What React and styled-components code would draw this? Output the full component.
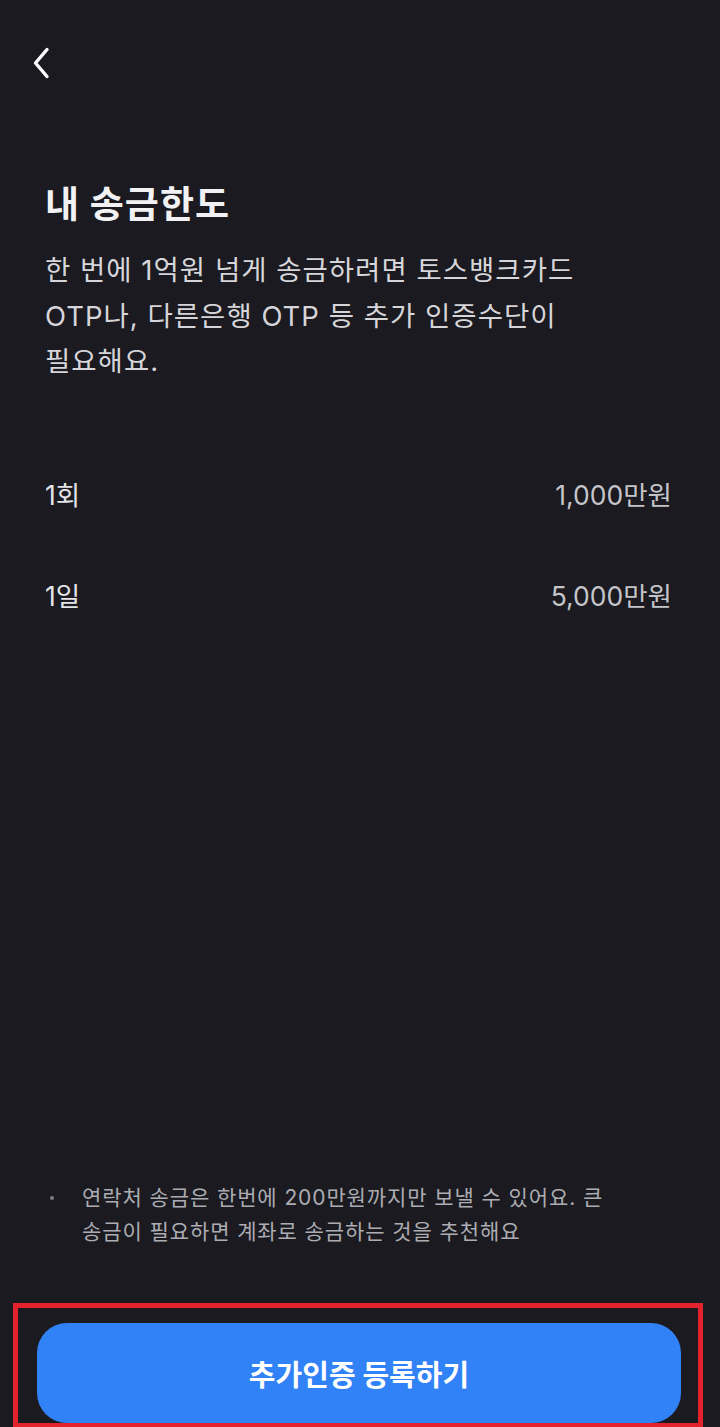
import React from "react";
import styled, { createGlobalStyle } from "styled-components";

const GlobalStyle = createGlobalStyle`
  html, body {
    margin: 0;
    padding: 0;
    background: #1a1a20;
  }
  * {
    box-sizing: border-box;
  }
`;

const Page = styled.div`
  min-height: 1427px;
  display: flex;
  flex-direction: column;
  background: #1a1a20;
  font-family: Inter, "Noto Sans CJK KR", sans-serif;
  color: #ececef;
`;

const Header = styled.div`
  height: 128px;
  padding: 43px 0 0 22px;
`;

const BackButton = styled.button`
  width: 40px;
  height: 40px;
  padding: 0;
  border: none;
  background: none;
  display: flex;
  align-items: center;
  justify-content: center;
  cursor: pointer;
`;

const Intro = styled.section`
  padding: 54px 45px 0;
`;

const Title = styled.h1`
  margin: 0 0 20px;
  font-size: 37px;
  line-height: 46px;
  font-weight: 700;
  letter-spacing: 1px;
  color: #f2f2f4;
`;

const Description = styled.p`
  margin: 0;
  font-size: 27.5px;
  line-height: 45.5px;
  letter-spacing: 1px;
  color: #d6d6da;
`;

const LimitList = styled.div`
  padding: 58px 48px 0 45px;
  display: flex;
  flex-direction: column;
`;

const LimitRow = styled.div`
  height: 101px;
  display: flex;
  align-items: center;
  justify-content: space-between;
  font-size: 26.5px;
`;

const Label = styled.span`
  color: #e4e4e8;
`;

const Value = styled.span`
  color: #c4c4c9;
`;

const Spacer = styled.div`
  flex: 1;
`;

const Notes = styled.ul`
  margin: 0;
  padding: 0 90px 0 48px;
  list-style: none;
`;

const Note = styled.li`
  position: relative;
  padding-left: 34px;
  font-size: 21px;
  line-height: 34px;
  letter-spacing: 0.9px;
  color: #acacb2;

  &::before {
    content: "";
    position: absolute;
    left: 2px;
    top: 15px;
    width: 4px;
    height: 4px;
    border-radius: 50%;
    background: #7c7c84;
  }
`;

const Highlight = styled.div`
  margin: 54px 17px 0 13px;
  padding: 15px 17px 0 19px;
  height: 124px;
  border: 5px solid #e3222b;
  border-bottom-width: 4px;
  overflow: hidden;
`;

const PrimaryButton = styled.button`
  width: 100%;
  height: 100px;
  border: none;
  border-radius: 30px;
  background: #3182f6;
  color: #ffffff;
  font-family: Inter, "Noto Sans CJK KR", sans-serif;
  font-size: 29px;
  font-weight: 700;
  cursor: pointer;
`;

export default function App() {
  return (
    <>
      <GlobalStyle />
      <Page>
        <Header>
          <BackButton aria-label="뒤로">
            <svg width="20" height="32" viewBox="0 0 20 32" fill="none">
              <path
                d="M15 2.5 L3.5 16 L15 29.5"
                stroke="#ffffff"
                strokeWidth="3.4"
                strokeLinecap="round"
                strokeLinejoin="round"
              />
            </svg>
          </BackButton>
        </Header>
        <Intro>
          <Title>내 송금한도</Title>
          <Description>
            한 번에 1억원 넘게 송금하려면 토스뱅크카드
            <br />
            OTP나, 다른은행 OTP 등 추가 인증수단이
            <br />
            필요해요.
          </Description>
        </Intro>
        <LimitList>
          <LimitRow>
            <Label>1회</Label>
            <Value>1,000만원</Value>
          </LimitRow>
          <LimitRow>
            <Label>1일</Label>
            <Value>5,000만원</Value>
          </LimitRow>
        </LimitList>
        <Spacer />
        <Notes>
          <Note>
            연락처 송금은 한번에 200만원까지만 보낼 수 있어요. 큰
            <br />
            송금이 필요하면 계좌로 송금하는 것을 추천해요
          </Note>
        </Notes>
        <Highlight>
          <PrimaryButton>추가인증 등록하기</PrimaryButton>
        </Highlight>
      </Page>
    </>
  );
}
